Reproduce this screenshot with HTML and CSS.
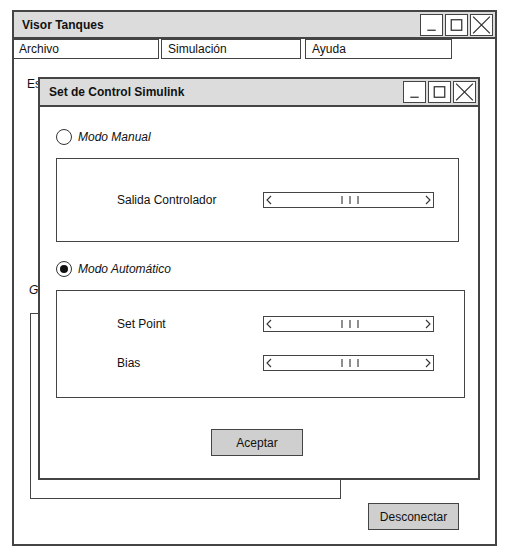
FILE: index.html
```html
<!DOCTYPE html>
<html lang="es">
<head>
<meta charset="utf-8">
<title>Visor Tanques</title>
<link rel="stylesheet" href="styles.css">
</head>
<body>
<div class="win">
  <div class="titlebar">
    <span class="title">Visor Tanques</span>
    <div class="ctrls">
      <div class="cb"><svg viewBox="0 0 20 19"><path d="M6 14.5H14"/></svg></div>
      <div class="cb"><svg viewBox="0 0 20 19"><rect x="5" y="4.5" width="10" height="10"/></svg></div>
      <div class="cb"><svg viewBox="0 0 20 19"><path d="M2 1.5L18 17.5M18 1.5L2 17.5"/></svg></div>
    </div>
  </div>
  <div class="menu">
    <div class="mi m1">Archivo</div>
    <div class="mi m2">Simulación</div>
    <div class="mi m3">Ayuda</div>
  </div>
  <div class="content">
    <div class="lbl-es">Es</div>
    <div class="lbl-g">G</div>
    <div class="panel"></div>
    <div class="foot"><div class="btn">Desconectar</div></div>
  </div>

  <div class="dialog">
    <div class="dtitlebar">
      <span class="title">Set de Control Simulink</span>
      <div class="ctrls">
        <div class="cb"><svg viewBox="0 0 20 19"><path d="M6 14.5H14"/></svg></div>
        <div class="cb"><svg viewBox="0 0 20 19"><rect x="5" y="4.5" width="10" height="10"/></svg></div>
        <div class="cb"><svg viewBox="0 0 20 19"><path d="M2 1.5L18 17.5M18 1.5L2 17.5"/></svg></div>
      </div>
    </div>
    <div class="dbody">
      <div class="radio-row r1"><span class="radio"></span><span>Modo Manual</span></div>
      <div class="box box1">
        <div class="row">
          <span class="lbl">Salida Controlador</span>
          <div class="scroll"><svg viewBox="0 0 169 14"><path d="M7 3L3 7L7 11M162 3L166 7L162 11M78 3V11M86 3V11M94 3V11"/></svg></div>
        </div>
      </div>
      <div class="radio-row r2"><span class="radio on"></span><span>Modo Automático</span></div>
      <div class="box box2">
        <div class="row">
          <span class="lbl">Set Point</span>
          <div class="scroll"><svg viewBox="0 0 169 14"><path d="M7 3L3 7L7 11M162 3L166 7L162 11M78 3V11M86 3V11M94 3V11"/></svg></div>
        </div>
        <div class="row">
          <span class="lbl">Bias</span>
          <div class="scroll"><svg viewBox="0 0 169 14"><path d="M7 3L3 7L7 11M162 3L166 7L162 11M78 3V11M86 3V11M94 3V11"/></svg></div>
        </div>
      </div>
      <div class="actions"><div class="btn accept">Aceptar</div></div>
    </div>
  </div>
</div>
</body>
</html>
```

FILE: styles.css
```css
* { box-sizing: border-box; }
html, body { margin: 0; padding: 0; background: #fff; }
body {
  font-family: "Liberation Sans", Arial, sans-serif;
  font-size: 12px;
  color: #111;
}
.win {
  position: relative;
  margin: 10px 0 0 12px;
  width: 485px;
  height: 536px;
  border: 2px solid #444;
  display: flex;
  flex-direction: column;
}
.titlebar {
  height: 27px;
  background: #dcdcdc;
  border-bottom: 2px solid #444;
  display: flex;
  align-items: center;
  justify-content: space-between;
  padding: 0 2px 0 8px;
}
.title { font-weight: bold; font-size: 12px; }
.ctrls { display: flex; gap: 2px; }
.cb {
  width: 23px;
  height: 22px;
  border: 1.5px solid #444;
  background: #fff;
  display: flex;
}
.cb svg { width: 100%; height: 100%; fill: none; stroke: #333; stroke-width: 1.2; }
.menu {
  display: flex;
  height: 20px;
  margin-left: -2px;
}
.mi {
  height: 20px;
  border: 1.5px solid #444;
  padding: 2px 0 0 6px;
  line-height: 15px;
}
.m1 { width: 147px; }
.m2 { width: 140px; margin-left: 2px; }
.m3 { width: 147px; margin-left: 4px; }
.content {
  flex: 1;
  display: flex;
  flex-direction: column;
  padding-left: 13px;
}
.lbl-es { margin-top: 17px; height: 16px; line-height: 16px; }
.lbl-g { margin-top: 190px; margin-left: 2px; height: 16px; line-height: 16px; font-style: italic; }
.panel {
  margin-top: 15px;
  margin-left: 3px;
  width: 311px;
  height: 186px;
  border: 1.5px solid #444;
}
.foot { display: flex; justify-content: flex-end; margin-top: 4px; padding-right: 36px; }
.btn {
  width: 91px;
  height: 27px;
  background: #cfcfcf;
  border: 1.5px solid #444;
  display: flex;
  align-items: center;
  justify-content: center;
}
.dialog {
  position: absolute;
  left: 24px;
  top: 65px;
  width: 442px;
  height: 403px;
  background: #fff;
  border: 2px solid #444;
  display: flex;
  flex-direction: column;
}
.dtitlebar {
  height: 28px;
  background: #dcdcdc;
  border-bottom: 2px solid #444;
  display: flex;
  align-items: center;
  justify-content: space-between;
  padding: 0 1px 0 9px;
}
.dtitlebar .ctrls { margin-right: 1px; }
.dbody { padding-left: 16px; display: flex; flex-direction: column; }
.radio-row { display: flex; align-items: center; gap: 6px; height: 16px; font-style: italic; }
.r1 { margin-top: 22px; }
.r2 { margin-top: 19px; }
.radio {
  width: 16px; height: 16px;
  border: 1.5px solid #333;
  border-radius: 50%;
  display: flex; align-items: center; justify-content: center;
}
.radio.on::after {
  content: "";
  width: 8px; height: 8px;
  border-radius: 50%;
  background: #111;
}
.box { border: 1.5px solid #444; display: flex; flex-direction: column; }
.box1 { margin-top: 13px; width: 403px; height: 84px; justify-content: center; }
.box2 { margin-top: 13px; width: 409px; height: 108px; padding-top: 25px; gap: 23px; }
.row { display: grid; grid-template-columns: 146px 171px; align-items: center; padding-left: 60px; height: 16px; }
.scroll { width: 171px; height: 16px; border: 1.5px solid #444; display: flex; }
.scroll svg { width: 100%; height: 100%; fill: none; stroke: #333; stroke-width: 1.1; }
.actions { display: flex; justify-content: center; margin-top: 31px; padding-right: 20px; }
.accept { width: 92px; }
```
